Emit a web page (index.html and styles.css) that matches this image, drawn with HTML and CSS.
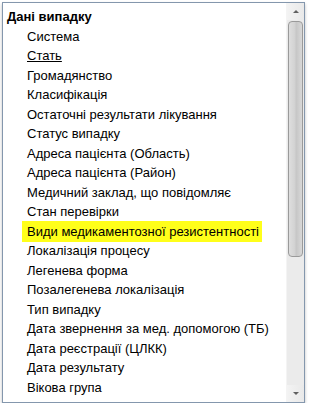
FILE: index.html
```html
<!DOCTYPE html>
<html lang="uk">
<head>
  <meta charset="UTF-8">
  <title>Дані випадку</title>
  <link rel="stylesheet" href="styles.css">
</head>
<body>

<div class="listbox">
  <div class="items">
    <div class="group">Дані випадку</div>
    <div class="item">Система</div>
    <div class="item"><u>Стать</u></div>
    <div class="item">Громадянство</div>
    <div class="item">Класифікація</div>
    <div class="item">Остаточні результати лікування</div>
    <div class="item">Статус випадку</div>
    <div class="item">Адреса пацієнта (Область)</div>
    <div class="item">Адреса пацієнта (Район)</div>
    <div class="item">Медичний заклад, що повідомляє</div>
    <div class="item">Стан перевірки</div>
    <div class="item"><span class="mark">Види медикаментозної резистентності</span></div>
    <div class="item">Локалізація процесу</div>
    <div class="item">Легенева форма</div>
    <div class="item">Позалегенева локалізація</div>
    <div class="item">Тип випадку</div>
    <div class="item">Дата звернення за мед. допомогою (ТБ)</div>
    <div class="item">Дата реєстрації (ЦЛКК)</div>
    <div class="item">Дата результату</div>
    <div class="item">Вікова група</div>
    <div class="item">Стать пацієнта</div>
  </div>
  <div class="scrollbar">
    <div class="btn up"><span></span></div>
    <div class="track">
      <div class="thumb"></div>
    </div>
    <div class="btn down"><span></span></div>
  </div>
</div>

</body>
</html>
```

FILE: styles.css
```css
body {
  margin: 0;
  background: #fff;
  font-family: 'Liberation Sans', Arial, sans-serif;
  font-size: 13px;
}
.listbox {
  display: flex;
  width: 301px;
  height: 399px;
  margin: 2px 0 0 2px;
  border: 1px solid #8497ad;
  background: #fff;
  box-shadow: 0 2px 3px rgba(0,0,0,0.25);
}
.items {
  flex: 1;
  overflow: hidden;
  padding-top: 4px;
}
.group {
  font-weight: bold;
  padding-left: 4px;
  line-height: 19.5px;
}
.item {
  padding-left: 24px;
  line-height: 19.5px;
  white-space: nowrap;
}
.mark {
  background: #ffff1a;
  padding: 3px 3px 3px 5px;
  margin-left: -5px;
}
.scrollbar {
  width: 17px;
  display: flex;
  flex-direction: column;
  background: #ebebeb;
  border-left: 1px solid #f4f4f4;
}
.btn {
  height: 17px;
  display: flex;
  align-items: center;
  justify-content: center;
  background: linear-gradient(to right, #f3f3f3, #e9e9e9);
}
.btn span {
  width: 0;
  height: 0;
  border-left: 3px solid transparent;
  border-right: 3px solid transparent;
}
.up span {
  border-bottom: 3px solid #606060;
}
.down span {
  border-top: 3px solid #606060;
}
.track {
  flex: 1;
  padding-top: 1px;
}
.thumb {
  height: 234px;
  margin: 0 1px;
  border: 1px solid #9a9a9a;
  border-radius: 4px;
  background: linear-gradient(to right, #dedede, #d2d2d2 45%, #c6c6c6 55%, #d8d8d8);
}
```
